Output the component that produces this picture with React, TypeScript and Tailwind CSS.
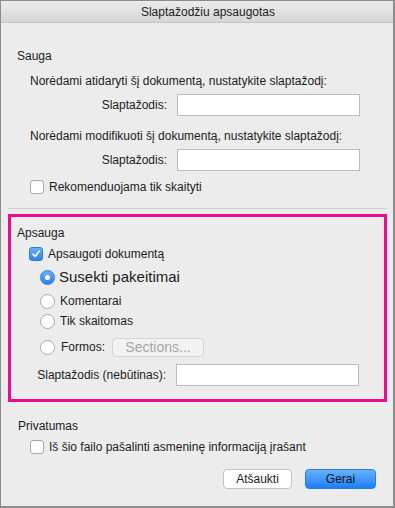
import React from 'react';

const font = { fontFamily: '"Liberation Sans", Arial, sans-serif' };

const Check: React.FC<{ checked?: boolean }> = ({ checked }) =>
  checked ? (
    <span className="flex h-[14px] w-[14px] items-center justify-center rounded-[3px] bg-gradient-to-b from-[#69aef7] to-[#2f83ec] border border-[#2b7be0]">
      <svg width="10" height="10" viewBox="0 0 10 10">
        <path d="M2 5.2 L4.1 7.4 L8.2 2.2" fill="none" stroke="white" strokeWidth="1.6" strokeLinecap="round" strokeLinejoin="round" />
      </svg>
    </span>
  ) : (
    <span className="block h-[14px] w-[14px] rounded-[3px] border border-[#a9a9a9] bg-white shadow-[inset_0_1px_0_rgba(0,0,0,0.04)]" />
  );

const Radio: React.FC<{ checked?: boolean }> = ({ checked }) =>
  checked ? (
    <span className="flex h-[15px] w-[15px] items-center justify-center rounded-full bg-gradient-to-b from-[#6ab0f8] to-[#2c80eb] border border-[#2b7be0]">
      <span className="block h-[5px] w-[5px] rounded-full bg-white" />
    </span>
  ) : (
    <span className="block h-[15px] w-[15px] rounded-full border border-[#a9a9a9] bg-white" />
  );

const Input: React.FC = () => (
  <div className="h-[22px] w-[183px] border border-[#bdbdbd] bg-white" />
);

const PwRow: React.FC<{ label: string; mt: string }> = ({ label, mt }) => (
  <div className={`flex h-[22px] items-center ${mt}`}>
    <div className="w-[167px] pr-[1px] text-right">{label}</div>
    <div className="ml-[9px]">
      <Input />
    </div>
  </div>
);

export default function App() {
  return (
    <div
      style={font}
      className="box-border flex h-[508px] w-[395px] flex-col border border-[#8c8c8c] border-r-2 border-b-2 bg-[#ececec] text-[12px] text-[#1c1c1c]"
    >
      <div className="flex h-[22px] shrink-0 items-center justify-center border-b border-[#c4c4c4] bg-gradient-to-b from-[#ececec] to-[#d6d6d6] pl-[22px] text-[12px] text-[#222]">
        Slaptažodžiu apsaugotas
      </div>

      <div className="mt-[23px] flex h-[20px] items-center pl-[16px]">Sauga</div>
      <div className="mt-[5px] flex h-[20px] items-center pl-[29px]">
        Norėdami atidaryti šį dokumentą, nustatykite slaptažodį:
      </div>
      <PwRow label="Slaptažodis:" mt="mt-[3px]" />
      <div className="mt-[10px] flex h-[20px] items-center pl-[29px]">
        Norėdami modifikuoti šį dokumentą, nustatykite slaptažodį:
      </div>
      <PwRow label="Slaptažodis:" mt="mt-[3px]" />
      <div className="mt-[6px] flex h-[20px] items-center gap-[5px] pl-[29px]">
        <Check />
        <span>Rekomenduojama tik skaityti</span>
      </div>
      <div className="ml-[7px] mr-[6px] mt-[11px] h-px bg-[#d2d2d2]" />

      <div className="ml-[7px] mr-[6px] mt-[5px] box-border flex h-[188px] flex-col border-[3px] border-[#ec0c8c]">
        <div className="mt-[6px] flex h-[20px] items-center pl-[6px]">Apsauga</div>
        <div className="mt-[1px] flex h-[20px] items-center gap-[5px] pl-[18px]">
          <Check checked />
          <span>Apsaugoti dokumentą</span>
        </div>
        <div className="mt-[3px] flex h-[20px] items-center gap-[4px] pl-[29px]">
          <Radio checked />
          <span className="text-[15px]">Susekti pakeitimai</span>
        </div>
        <div className="mt-[4px] flex h-[20px] items-center gap-[5px] pl-[29px]">
          <Radio />
          <span>Komentarai</span>
        </div>
        <div className="flex h-[20px] items-center gap-[5px] pl-[29px]">
          <Radio />
          <span>Tik skaitomas</span>
        </div>
        <div className="mt-[6px] flex h-[20px] items-center pl-[29px]">
          <Radio />
          <span className="ml-[6px]">Formos:</span>
          <div className="ml-[7px] flex h-[19px] w-[92px] items-center justify-center rounded-[4px] border border-[#d4d4d4] bg-[#f2f2f2] text-[14px] text-[#a6a6a6]">
            Sections...
          </div>
        </div>
        <div className="mt-[7px] flex h-[22px] items-center">
          <div className="w-[156px] pr-[1px] text-right">Slaptažodis (nebūtinas):</div>
          <div className="ml-[9px]">
            <Input />
          </div>
        </div>
      </div>

      <div className="mt-[14px] flex h-[20px] items-center pl-[17px]">Privatumas</div>
      <div className="mt-[1px] flex h-[20px] items-center gap-[5px] pl-[29px]">
        <Check />
        <span>Iš šio failo pašalinti asmeninę informaciją įrašant</span>
      </div>
      <div className="mt-[12px] flex h-[20px] items-center justify-end gap-[13px] pr-[17px]">
        <div className="flex h-[20px] w-[69px] items-center justify-center rounded-[4px] border border-[#c2c2c2] bg-white">
          Atšaukti
        </div>
        <div className="flex h-[20px] w-[71px] items-center justify-center rounded-[4px] border border-[#2a7fe6] bg-gradient-to-b from-[#66b1fb] to-[#1b7ef8] text-[#151515]">
          Gerai
        </div>
      </div>
    </div>
  );
}
